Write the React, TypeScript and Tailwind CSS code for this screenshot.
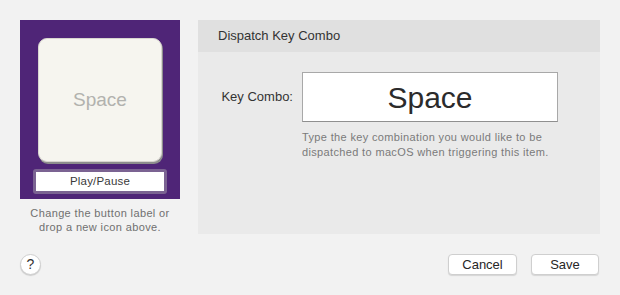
export default function App() {
  return (
    <div className="w-[620px] h-[295px] bg-[#f2f2f2] pt-5 px-5 flex flex-col font-['Liberation_Sans',Arial,sans-serif] text-[#262626]">
      <div className="flex gap-[18px] h-[214px]">
        {/* left: icon preview */}
        <div className="w-[160px] flex flex-col">
          <div className="w-[160px] h-[180px] bg-[#4f2577] flex flex-col items-center pt-[18px]">
            <div className="w-[124px] h-[124px] rounded-[9px] bg-[#f6f5ef] shadow-[1px_2px_0_#8d8d8d] border border-[#d8d6cf] flex items-center justify-center">
              <span className="text-[19px] text-[#b2b2ae]">Space</span>
            </div>
            <div className="mt-[7px] w-[134px] h-[25px] rounded-[3px] bg-[#7b6392] p-[3px]">
              <div className="h-full bg-white flex items-center justify-center text-[11.5px] tracking-[0.2px] text-[#3a3a3a]">
                Play/Pause
              </div>
            </div>
          </div>
          <p className="mt-[7px] text-[11px] leading-[14px] tracking-[0.37px] text-[#707070] text-center">
            Change the button label or
            <br />
            drop a new icon above.
          </p>
        </div>

        {/* right: action settings */}
        <div className="w-[402px] bg-[#eaeaea] flex flex-col">
          <div className="h-8 bg-[#e0e0e0] flex items-center pl-5 text-[13px] text-[#333]">
            Dispatch Key Combo
          </div>
          <div className="pt-5 flex">
            <div className="w-[95px] h-[50px] flex items-center justify-end text-[13px] text-[#333]">
              Key Combo:
            </div>
            <div className="ml-[9px] flex flex-col">
              <div className="w-[256px] h-[50px] bg-white border border-[#a8a8a8] border-b-[#8f8f8f] flex items-center justify-center text-[30px] text-[#2b2b2b]">
                Space
              </div>
              <p className="mt-[8px] text-[11px] leading-[15px] tracking-[0.35px] text-[#7a7a7a]">
                Type the key combination you would like to be
                <br />
                dispatched to macOS when triggering this item.
              </p>
            </div>
          </div>
        </div>
      </div>

      <div className="mt-5 flex items-center justify-between pr-px">
        <button className="w-[21px] h-[21px] rounded-full bg-white border border-[#cfcfcf] shadow-[0_1px_1px_rgba(0,0,0,0.15)] flex items-center justify-center text-[14px] text-[#333]">
          ?
        </button>
        <div className="flex gap-[14px]">
          <button className="w-[69px] h-[21px] rounded-[4px] bg-white border border-[#cfcfcf] shadow-[0_1px_1px_rgba(0,0,0,0.12)] text-[13px] text-[#262626] flex items-center justify-center">
            Cancel
          </button>
          <button className="w-[68px] h-[21px] rounded-[4px] bg-white border border-[#cfcfcf] shadow-[0_1px_1px_rgba(0,0,0,0.12)] text-[13px] text-[#262626] flex items-center justify-center">
            Save
          </button>
        </div>
      </div>
    </div>
  )
}
